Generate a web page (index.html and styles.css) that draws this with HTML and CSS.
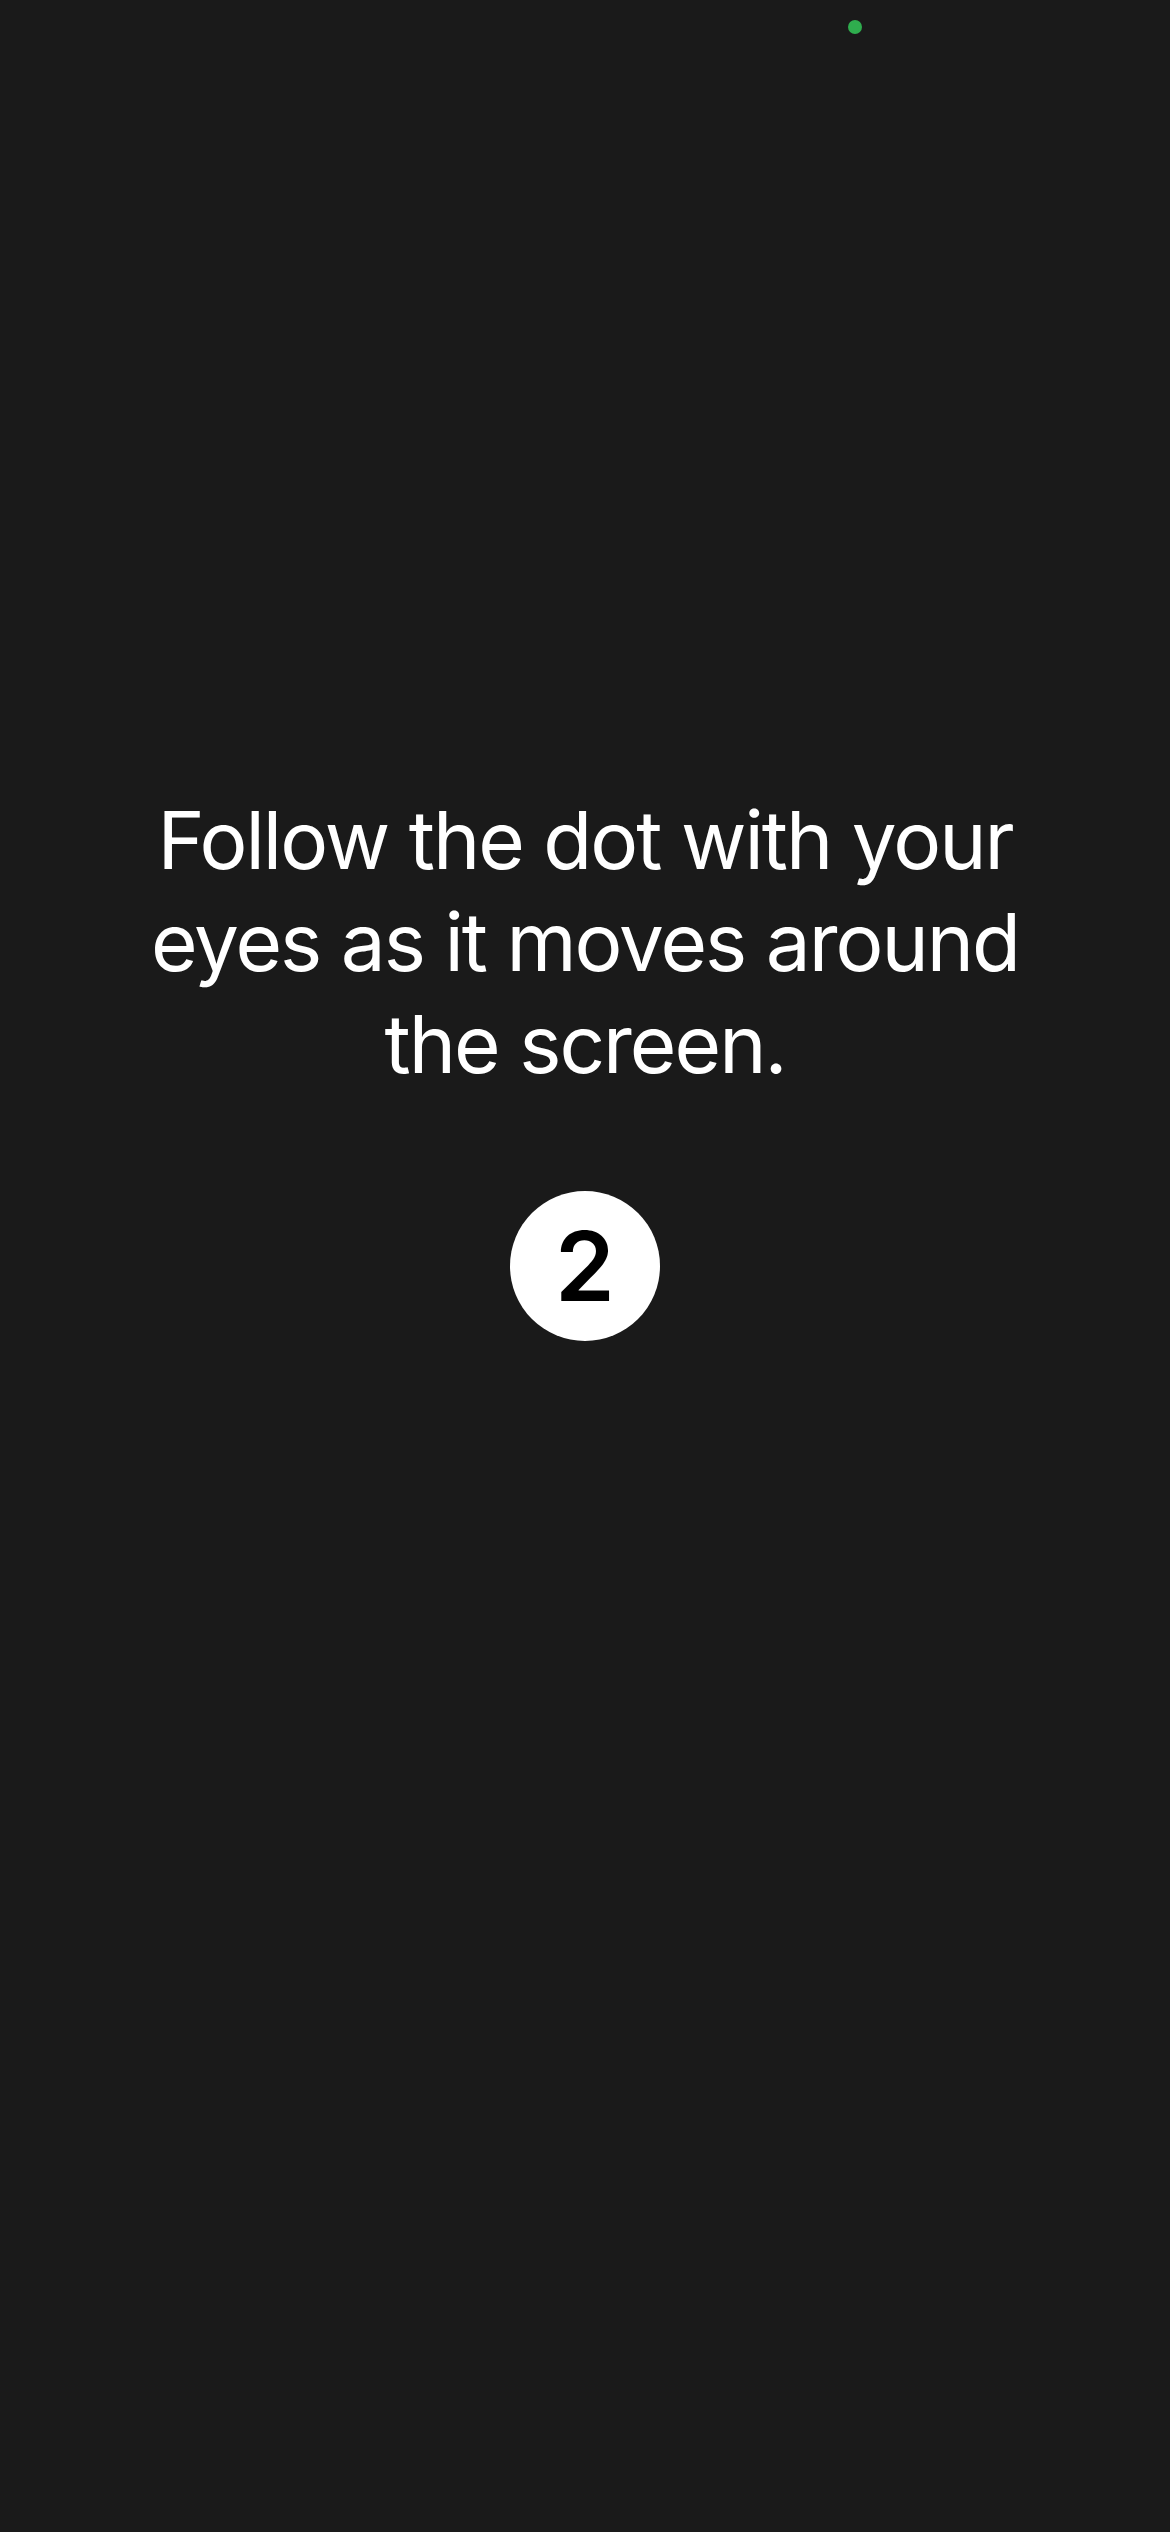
FILE: index.html
```html
<!DOCTYPE html>
<html lang="en">
<head>
<meta charset="utf-8">
<title>Follow the dot</title>
<link rel="stylesheet" href="styles.css">
</head>
<body>
<main class="screen">
  <span class="dot"></span>
  <section class="intro">
    <p class="instruction">Follow the dot with your eyes as it moves around the screen.</p>
    <div class="count">2</div>
  </section>
</main>
</body>
</html>
```

FILE: styles.css
```css
html, body {
  margin: 0;
  padding: 0;
  background: #1a1a1a;
}

.screen {
  position: relative;
  width: 1170px;
  height: 2532px;
  background: #1a1a1a;
  overflow: hidden;
}

.dot {
  position: absolute;
  left: 848px;
  top: 20px;
  width: 14px;
  height: 14px;
  border-radius: 50%;
  background: #2fad4e;
}

.intro {
  display: flex;
  flex-direction: column;
  align-items: center;
  padding-top: 789px;
}

.instruction {
  margin: 0;
  width: 1000px;
  font-family: Inter, "Noto Sans", sans-serif;
  font-size: 80px;
  line-height: 102px;
  font-weight: 400;
  letter-spacing: -2px;
  color: #ffffff;
  text-align: center;
}

.count {
  margin-top: 96px;
  width: 150px;
  height: 150px;
  border-radius: 50%;
  background: #ffffff;
  color: #000000;
  display: flex;
  align-items: center;
  justify-content: center;
  font-family: Inter, "Noto Sans", sans-serif;
  font-size: 96px;
  font-weight: 600;
  line-height: 1;
}
```
